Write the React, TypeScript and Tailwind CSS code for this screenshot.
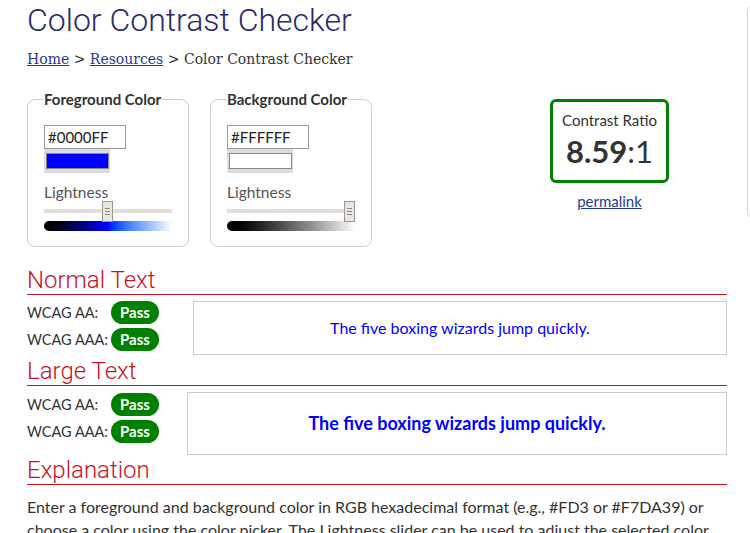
import React from "react";

const body = "font-['Lato','Noto_Sans',sans-serif]";

function Handle({ left }: { left: string }) {
  return (
    <div
      className="absolute top-[-8px] w-[11px] h-[21px] bg-[#e9e6e1] border border-[#9a9690] flex flex-col items-center justify-center gap-[2px]"
      style={{ left }}
    >
      <div className="w-[5px] h-px bg-[#8a8680]" />
      <div className="w-[5px] h-px bg-[#8a8680]" />
      <div className="w-[5px] h-px bg-[#8a8680]" />
    </div>
  );
}

function ColorBox({
  legend,
  hex,
  swatch,
  handle,
  gradient,
}: {
  legend: string;
  hex: string;
  swatch: string;
  handle: string;
  gradient: string;
}) {
  return (
    <div className="relative w-[162px] h-[148px] border border-[#cfcfcf] rounded-[8px] px-[16px] pt-[25px]">
      <span className="absolute left-[15px] top-[-9px] bg-white px-px text-[15px] font-bold text-[#333] leading-[16px]">
        {legend}
      </span>
      <div className="w-[82px] h-[24px] border border-[#9a9a9a] text-[15px] text-[#222] leading-[22px] pl-[3px]">
        {hex}
      </div>
      <div className="w-[66px] h-[24px] bg-[#dcdcdc] pt-[4px] pl-[2px]">
        <div className={`w-[63px] h-[16px] border border-[#888] ${swatch}`} />
      </div>
      <div className="mt-[10px] text-[15.5px] text-[#555] leading-[18px]">Lightness</div>
      <div className="relative mt-[8px] w-[128px] h-[4px] bg-[#e2ded8]">
        <Handle left={handle} />
      </div>
      <div className={`mt-[8px] w-[128px] h-[10px] rounded-l-[5px] ${gradient}`} />
    </div>
  );
}

function Pass() {
  return (
    <span className="inline-flex items-center justify-center w-[48px] h-[23px] rounded-full bg-[#008000] text-white font-bold text-[15px]">
      Pass
    </span>
  );
}

function Section({ title }: { title: string }) {
  return (
    <h2 className="font-['Roboto',sans-serif] font-light text-[24px] leading-[28px] text-[#c4141f] border-b border-[#c4141f]">
      {title}
    </h2>
  );
}

function Results({ large }: { large?: boolean }) {
  return (
    <div className="flex items-start">
      <div className={`w-[160px] flex flex-col gap-[4px] text-[14.5px] text-[#333] ${large ? "mt-[7px]" : "mt-[6px]"}`}>
        <div className="flex items-center h-[23px]">
          <span className="w-[84px]">WCAG AA:</span>
          <Pass />
        </div>
        <div className="flex items-center h-[23px]">
          <span className="w-[84px]">WCAG AAA:</span>
          <Pass />
        </div>
      </div>
      {large ? (
        <div className="mt-[6px] flex-1 h-[63px] border border-[#cccccc] flex items-center justify-center text-[#0000ff] font-bold text-[18px]">
          The five boxing wizards jump quickly.
        </div>
      ) : (
        <div className="mt-[6px] ml-[6px] flex-1 h-[54px] border border-[#cccccc] flex items-center justify-center text-[#0000ff] text-[16px]">
          The five boxing wizards jump quickly.
        </div>
      )}
    </div>
  );
}

export default function App() {
  return (
    <div className={`w-[750px] h-[533px] overflow-hidden bg-white flex ${body}`}>
      <main className="ml-[27px] w-[700px] shrink-0">
        <h1 className="font-['Roboto',sans-serif] font-light text-[32px] leading-[40px] text-[#2b296b]">
          Color Contrast Checker
        </h1>
        <div className="mt-[9px] font-['DejaVu_Serif',serif] text-[14px] text-[#333] leading-[20px]">
          <a className="text-[#1f3a8f] underline">Home</a> &gt;{" "}
          <a className="text-[#1f3a8f] underline">Resources</a> &gt; Color Contrast Checker
        </div>
        <div className="flex items-start mt-[30px]">
          <ColorBox
            legend="Foreground Color"
            hex="#0000FF"
            swatch="bg-[#0000ff]"
            handle="58px"
            gradient="bg-gradient-to-r from-[#000000] via-[#0000ff] to-[#ffffff]"
          />
          <div className="ml-[21px]">
            <ColorBox
              legend="Background Color"
              hex="#FFFFFF"
              swatch="bg-white"
              handle="117px"
              gradient="bg-gradient-to-r from-[#000000] to-[#ffffff]"
            />
          </div>
          <div className="ml-[178px] flex flex-col items-center">
            <div className="w-[119px] h-[84px] border-[3px] border-[#008000] rounded-[6px] flex flex-col items-center pt-[8px]">
              <div className="text-[15px] text-[#333] leading-[20px]">Contrast Ratio</div>
              <div className="text-[31px] text-[#333] leading-[36px] mt-[3px]">
                <span className="font-bold">8.59</span>:1
              </div>
            </div>
            <a className="mt-[8px] text-[15px] text-[#1f3a8f] underline leading-[20px]">permalink</a>
          </div>
        </div>
        <div className="mt-[19px]">
          <Section title="Normal Text" />
          <Results />
        </div>
        <div className="mt-[2px]">
          <Section title="Large Text" />
          <Results large />
        </div>
        <div className="mt-px">
          <Section title="Explanation" />
          <p className="mt-[10px] text-[16px] leading-[23px] text-[#333]">
            Enter a foreground and background color in RGB hexadecimal format (e.g., #FD3 or #F7DA39) or
            choose a color using the color picker. The Lightness slider can be used to adjust the selected color.
          </p>
        </div>
      </main>
      <aside className="ml-[20px] mt-[5px] w-[200px] h-[213px] shrink-0 border border-[#d4d4d4] rounded-[6px]" />
    </div>
  );
}
